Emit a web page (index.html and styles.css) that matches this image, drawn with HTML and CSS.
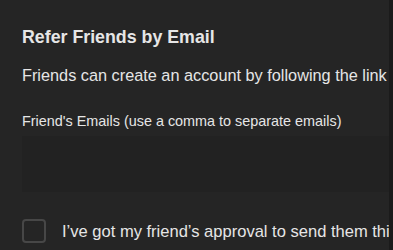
FILE: index.html
```html
<!DOCTYPE html>
<html>
<head>
  <title>Refer Friends</title>
  <link rel="stylesheet" href="styles.css">
</head>
<body>
  <div class="refer-panel">
    <h2 class="refer-title">Refer Friends by Email</h2>
    <p class="refer-text">Friends can create an account by following the link</p>

    <label class="field-label" for="emails">Friend's Emails (use a comma to separate emails)</label>
    <textarea id="emails" class="email-box"></textarea>

    <label class="approval">
      <input type="checkbox" class="approval-check">
      <span class="approval-text">I&rsquo;ve got my friend&rsquo;s approval to send them this email</span>
    </label>
  </div>
</body>
</html>
```

FILE: styles.css
```css
html, body {
  margin: 0;
  height: 100%;
  background-color: #1b1b1b;
  overflow: hidden;
}
.refer-panel {
  width: 389px;
  height: 100%;
  box-sizing: border-box;
  padding: 27px 0 0 22px;
  background-color: #252525;
  color: #e6e6e6;
  font-family: "Liberation Sans", Arial, sans-serif;
  white-space: nowrap;
  overflow: hidden;
}
.refer-title {
  margin: 0;
  font-size: 17.8px;
  line-height: 20px;
  font-weight: bold;
}
.refer-text {
  margin: 18px 0 0;
  font-size: 16.3px;
  line-height: 20px;
}
.field-label {
  display: block;
  margin-top: 28px;
  font-size: 14.4px;
  line-height: 16px;
}
.email-box {
  display: block;
  width: 400px;
  height: 56px;
  margin-top: 7px;
  padding: 0;
  border: none;
  background-color: #222222;
  resize: none;
}
.approval {
  display: flex;
  align-items: center;
  gap: 16px;
  margin-top: 27px;
  font-size: 16.55px;
}
.approval-check {
  appearance: none;
  flex-shrink: 0;
  width: 24px;
  height: 24px;
  margin: 0;
  border: 2px solid #474747;
  border-radius: 4px;
  background: transparent;
}
.approval-text {
  padding-top: 2px;
}
```
